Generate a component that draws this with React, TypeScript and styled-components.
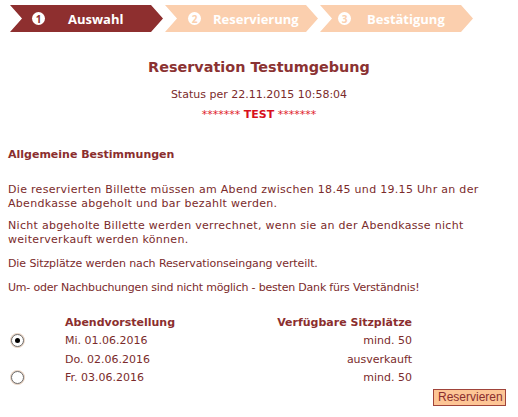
import { Fragment } from "react";
import styled, { createGlobalStyle } from "styled-components";

const GlobalStyle = createGlobalStyle`
  body {
    margin: 0;
    background: #ffffff;
    font-family: "DejaVu Sans", Verdana, sans-serif;
    font-size: 11px;
    color: #7b2b2b;
  }
`;

const Page = styled.div`
  width: 518px;
  height: 417px;
  overflow: hidden;
  padding: 5px 8px 0 8px;
  box-sizing: border-box;
`;

const Steps = styled.div`
  display: flex;
  gap: 2px;
  padding-left: 2px;
  height: 27px;
`;

const Step = styled.div<{ $active?: boolean; $pad: number; $gap: number }>`
  width: 153px;
  height: 27px;
  display: flex;
  align-items: center;
  gap: ${(p) => p.$gap}px;
  padding-left: ${(p) => p.$pad}px;
  box-sizing: border-box;
  background: ${(p) => (p.$active ? "#8e2f2f" : "#fbcfae")};
  color: #ffffff;
  clip-path: polygon(0 0, calc(100% - 12px) 0, 100% 50%, calc(100% - 12px) 100%, 0 100%, 12px 50%);
  font-family: "Open Sans", sans-serif;
  font-weight: 700;
  font-size: 13px;
`;

const StepNum = styled.span<{ $active?: boolean }>`
  width: 13px;
  height: 13px;
  border-radius: 50%;
  background: #ffffff;
  color: ${(p) => (p.$active ? "#8e2f2f" : "#fbcfae")};
  font-size: 10px;
  font-weight: 700;
  display: flex;
  align-items: center;
  justify-content: center;
  line-height: 1;
`;

const Title = styled.h1`
  margin: 25px 0 0 0;
  text-align: center;
  font-size: 14.4px;
  font-weight: 700;
  color: #8b3232;
  line-height: 20px;
`;

const Status = styled.div`
  margin-top: 11px;
  text-align: center;
  line-height: 14px;
`;

const TestLine = styled.div`
  margin-top: 6px;
  text-align: center;
  line-height: 14px;
  color: #e0202a;
  b {
    color: #d80f1c;
  }
`;

const Heading = styled.h2`
  margin: 26px 0 0 0;
  font-size: 11px;
  font-weight: 700;
  color: #8b2e2e;
  line-height: 14px;
`;

const Para = styled.p<{ $top: number; $track: number }>`
  margin: ${(p) => p.$top}px 0 0 0;
  line-height: 14px;
  letter-spacing: ${(p) => p.$track}px;
`;

const Table = styled.div`
  margin-top: 18px;
  width: 404px;
  display: grid;
  grid-template-columns: 57px 1fr auto;
  grid-auto-rows: 18.5px;
  align-items: center;
`;

const HeadCell = styled.div<{ $right?: boolean }>`
  font-weight: 700;
  color: #8b2e2e;
  text-align: ${(p) => (p.$right ? "right" : "left")};
`;

const Cell = styled.div<{ $right?: boolean }>`
  text-align: ${(p) => (p.$right ? "right" : "left")};
`;

const Radio = styled.span<{ $checked?: boolean }>`
  display: block;
  margin-left: 3px;
  width: 11px;
  height: 11px;
  border-radius: 50%;
  border: 1px solid #6d6d6d;
  background: #ffffff;
  box-shadow: 0 0 0 1px #e9d4c4;
  position: relative;
  &::after {
    content: "";
    display: ${(p) => (p.$checked ? "block" : "none")};
    position: absolute;
    left: 3px;
    top: 3px;
    width: 5px;
    height: 5px;
    border-radius: 50%;
    background: #000000;
  }
`;

const Footer = styled.div`
  display: flex;
  justify-content: flex-end;
  margin-top: 2px;
  padding-right: 4px;
`;

const Button = styled.button`
  font-family: "Liberation Sans", Arial, sans-serif;
  font-size: 12px;
  color: #8a2e2e;
  background: #fdc595;
  border: 1px solid #a0443a;
  padding: 0 4px;
  height: 17px;
  width: 73px;
  line-height: 15px;
`;

const rows = [
  { date: "Mi. 01.06.2016", seats: "mind. 50", radio: true, checked: true },
  { date: "Do. 02.06.2016", seats: "ausverkauft", radio: false, checked: false },
  { date: "Fr. 03.06.2016", seats: "mind. 50", radio: true, checked: false },
];

export default function App() {
  return (
    <Page>
      <GlobalStyle />
      <Steps>
        <Step $active $pad={22} $gap={23}>
          <StepNum $active>1</StepNum>
          Auswahl
        </Step>
        <Step $pad={23} $gap={12}>
          <StepNum>2</StepNum>
          Reservierung
        </Step>
        <Step $pad={18} $gap={16}>
          <StepNum>3</StepNum>
          Bestätigung
        </Step>
      </Steps>
      <Title>Reservation Testumgebung</Title>
      <Status>Status per 22.11.2015 10:58:04</Status>
      <TestLine>
        ******* <b>TEST</b> *******
      </TestLine>
      <Heading>Allgemeine Bestimmungen</Heading>
      <Para $top={21} $track={0.3}>
        Die reservierten Billette müssen am Abend zwischen 18.45 und 19.15 Uhr an der
        Abendkasse abgeholt und bar bezahlt werden.
      </Para>
      <Para $top={8} $track={0.3}>
        Nicht abgeholte Billette werden verrechnet, wenn sie an der Abendkasse nicht
        weiterverkauft werden können.
      </Para>
      <Para $top={10} $track={-0.1}>
        Die Sitzplätze werden nach Reservationseingang verteilt.
      </Para>
      <Para $top={10} $track={-0.2}>
        Um- oder Nachbuchungen sind nicht möglich - besten Dank fürs Verständnis!
      </Para>
      <Table>
        <div />
        <HeadCell>Abendvorstellung</HeadCell>
        <HeadCell $right>Verfügbare Sitzplätze</HeadCell>
        {rows.map((r) => (
          <Fragment key={r.date}>
            <div>{r.radio ? <Radio $checked={r.checked} /> : null}</div>
            <Cell>{r.date}</Cell>
            <Cell $right>{r.seats}</Cell>
          </Fragment>
        ))}
      </Table>
      <Footer>
        <Button>Reservieren</Button>
      </Footer>
    </Page>
  );
}
